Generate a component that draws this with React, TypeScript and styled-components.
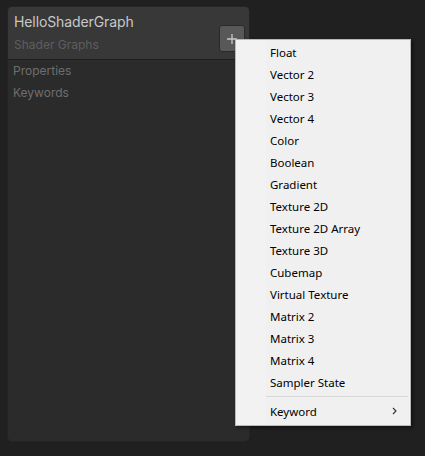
import React from "react";
import styled, { createGlobalStyle } from "styled-components";

const Global = createGlobalStyle`
  html, body { margin: 0; padding: 0; background: #202020; }
  body { width: 425px; height: 456px; overflow: hidden; }
`;

const Page = styled.div`
  position: relative;
  width: 425px;
  height: 456px;
  padding: 6px 0 0 7px;
  box-sizing: border-box;
  font-family: Inter, "Noto Sans", sans-serif;
`;

const Panel = styled.div`
  width: 243px;
  height: 436px;
  box-sizing: border-box;
  background: #2b2b2b;
  border: 1px solid #242424;
  border-radius: 5px;
  overflow: hidden;
  display: flex;
  flex-direction: column;
`;

const Header = styled.div`
  height: 52px;
  background: #383838;
  border-bottom: 1px solid #1f1f1f;
  display: flex;
  align-items: flex-start;
  justify-content: space-between;
  padding: 0 4px 0 6px;
`;

const Titles = styled.div`
  display: flex;
  flex-direction: column;
  padding-top: 6px;
`;

const Title = styled.div`
  color: #c8c8c8;
  font-size: 14px;
  line-height: 18px;
  letter-spacing: -0.1px;
`;

const Subtitle = styled.div`
  color: #5e5e5e;
  font-size: 12px;
  line-height: 16px;
  margin-top: 6px;
`;

const AddButton = styled.div`
  margin-top: 18px;
  width: 26px;
  height: 27px;
  box-sizing: border-box;
  background: #585858;
  border: 1px solid #2a2a2a;
  border-radius: 3px;
  color: #c4c4c4;
  display: flex;
  align-items: center;
  justify-content: center;
`;

const Section = styled.div`
  color: #6e6e6e;
  font-size: 12px;
  line-height: 22px;
  padding-left: 5px;
`;

const Sections = styled.div`
  display: flex;
  flex-direction: column;
`;

const Menu = styled.div`
  position: absolute;
  left: 235px;
  top: 39px;
  width: 176px;
  box-sizing: border-box;
  border: 1px solid #b9b9b9;
  background: linear-gradient(to right, #f2f2f2 0 30px, #f0f0f0 30px);
  padding: 1px 0 3px;
  box-shadow: 2px 2px 3px rgba(0, 0, 0, 0.45);
  font-family: "Noto Sans", "Open Sans", sans-serif;
`;

const Item = styled.div`
  height: 22px;
  display: flex;
  align-items: center;
  justify-content: space-between;
  padding: 0 12px 0 34px;
  font-size: 11.5px;
  color: #000;
`;

const Separator = styled.div`
  height: 1px;
  background: #d7d7d7;
  margin: 3px 2px 3px 30px;
`;

const items = [
  "Float",
  "Vector 2",
  "Vector 3",
  "Vector 4",
  "Color",
  "Boolean",
  "Gradient",
  "Texture 2D",
  "Texture 2D Array",
  "Texture 3D",
  "Cubemap",
  "Virtual Texture",
  "Matrix 2",
  "Matrix 3",
  "Matrix 4",
  "Sampler State",
];

export default function App() {
  return (
    <Page>
      <Global />
      <Panel>
        <Header>
          <Titles>
            <Title>HelloShaderGraph</Title>
            <Subtitle>Shader Graphs</Subtitle>
          </Titles>
          <AddButton>
            <svg width="12" height="12" viewBox="0 0 12 12">
              <path d="M6 1v10M1 6h10" stroke="#c8c8c8" strokeWidth="1.3" />
            </svg>
          </AddButton>
        </Header>
        <Sections>
          <Section>Properties</Section>
          <Section>Keywords</Section>
        </Sections>
      </Panel>
      <Menu>
        {items.map((t) => (
          <Item key={t}>{t}</Item>
        ))}
        <Separator />
        <Item>
          <span>Keyword</span>
          <svg width="6" height="8" viewBox="0 0 6 8">
            <path d="M1 1l3 3-3 3" stroke="#333" strokeWidth="1.1" fill="none" />
          </svg>
        </Item>
      </Menu>
    </Page>
  );
}
